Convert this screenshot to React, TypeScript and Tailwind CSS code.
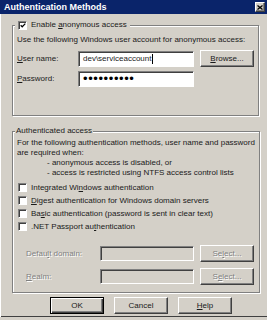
import React from 'react';

const sunken =
  'border border-t-[#808080] border-l-[#808080] border-b-white border-r-white shadow-[inset_1px_1px_0_#404040]';
const raised =
  'border border-t-white border-l-white border-b-[#404040] border-r-[#404040] shadow-[inset_-1px_-1px_0_#808080]';
const disabledText = 'text-[#808080] [text-shadow:1px_1px_0_#fff]';

const CheckBox: React.FC<{ checked?: boolean }> = ({ checked }) => (
  <span className={`flex h-[9px] w-[9px] shrink-0 items-center justify-center bg-white ${sunken}`}>
    {checked && (
      <svg width="7" height="7" viewBox="0 0 7 7" className="ml-[1px] mt-[1px]">
        <polyline points="0.8,3.2 2.6,5 6.2,1.4" fill="none" stroke="#000" strokeWidth="1.4" />
      </svg>
    )}
  </span>
);

const Button: React.FC<{
  children: React.ReactNode;
  isDefault?: boolean;
  disabled?: boolean;
}> = ({ children, isDefault, disabled }) => (
  <button
    type="button"
    disabled={disabled}
    className={`flex h-[17px] w-[54px] shrink-0 items-center justify-center bg-[#d4d0c8] ${
      isDefault
        ? 'border border-black shadow-[inset_1px_1px_0_#fff,inset_-1px_-1px_0_#404040,inset_-2px_-2px_0_#808080]'
        : raised
    } ${disabled ? disabledText : 'text-[#1a1a1a]'}`}
  >
    {children}
  </button>
);

const Field: React.FC<{ children?: React.ReactNode; width: string; gray?: boolean }> = ({
  children,
  width,
  gray
}) => (
  <div
    className={`flex items-center overflow-hidden pl-[4px] ${width} ${sunken} ${
      gray ? 'bg-[#d4d0c8]' : 'bg-white'
    }`}
  >
    {children}
  </div>
);

const methods: { label: React.ReactNode }[] = [
  { label: <>Integrated Wi<u>n</u>dows authentication</> },
  { label: <><u>D</u>igest authentication for Windows domain servers</> },
  { label: <>Ba<u>s</u>ic authentication (password is sent in clear text)</> },
  { label: <>.NET Passport au<u>t</u>hentication</> }
];

export default function App() {
  return (
    <div className="h-[320px] w-[267px] bg-[#d4d0c8] text-[8px] leading-[10px] text-[#1a1a1a] [font-family:'Liberation_Sans',Arial,sans-serif]">
      <div className="flex h-[317px] flex-col shadow-[inset_1px_0_0_#fff,inset_0_-1px_0_#404040]">
        {/* Title bar */}
        <div className="flex h-[14px] shrink-0 items-center justify-between bg-[#0a246a] pl-[4px] pr-[2px]">
          <span className="text-[9px] font-bold text-white">Authentication Methods</span>
          <span className={`flex h-[10px] w-[10px] items-center justify-center bg-[#d4d0c8] ${raised}`}>
            <svg width="6" height="5" viewBox="0 0 6 5">
              <path d="M0.5 0.5 L5.5 4.5 M5.5 0.5 L0.5 4.5" stroke="#000" strokeWidth="1.3" />
            </svg>
          </span>
        </div>

        {/* Anonymous access */}
        <fieldset className="mx-[12px] mt-[6px] h-[96px] shrink-0 border border-[#808080] px-[4px] shadow-[inset_1px_1px_0_#fff,1px_1px_0_#fff]">
          <legend className="-ml-[2px] bg-[#d4d0c8] px-[3px]">
            <span className="flex h-[10px] items-center gap-[4px]">
              <CheckBox checked />
              <span>
                Enable <u>a</u>nonymous access
              </span>
            </span>
          </legend>
          <div className="mt-[5px] whitespace-nowrap">
            Use the following Windows user account for anonymous access:
          </div>
          <div className="mt-[5px] flex h-[17px] items-center">
            <span className="w-[61px]">
              <u>U</u>ser name:
            </span>
            <Field width="h-[16px] w-[116px]">
              <span>{'dev\\serviceaccount'}</span>
              <span className="ml-[1px] h-[10px] w-[1px] bg-black" />
            </Field>
            <span className="ml-[6px]">
              <Button>
                <u>B</u>rowse...
              </Button>
            </span>
          </div>
          <div className="mt-[4px] flex h-[16px] items-center">
            <span className="w-[61px]">
              <u>P</u>assword:
            </span>
            <Field width="h-[16px] w-[116px]">
              <span className="text-[13px] leading-[10px] tracking-[0.6px] text-black">••••••••••</span>
            </Field>
          </div>
        </fieldset>

        {/* Authenticated access */}
        <fieldset className="mx-[12px] mt-[10px] h-[167px] shrink-0 border border-[#808080] px-[4px] shadow-[inset_1px_1px_0_#fff,1px_1px_0_#fff]">
          <legend className="-ml-[2px] bg-[#d4d0c8] px-[1px]">Authenticated access</legend>
          <div className="mt-[2px] whitespace-nowrap">
            <div>For the following authentication methods, user name and password</div>
            <div>are required when:</div>
            <div className="pl-[30px]">- anonymous access is disabled, or</div>
            <div className="pl-[30px]">- access is restricted using NTFS access control lists</div>
          </div>
          <div className="mt-[3px] flex flex-col">
            {methods.map((m, i) => (
              <div key={i} className="flex h-[13px] items-center gap-[4px] whitespace-nowrap pl-[1px]">
                <CheckBox />
                <span>{m.label}</span>
              </div>
            ))}
          </div>
          <div className="mt-[12px] flex h-[17px] items-center pl-[9px]">
            <span className={`w-[74px] ${disabledText}`}>
              Defau<u>l</u>t domain:
            </span>
            <Field width="h-[15px] w-[94px]" gray />
            <span className="ml-[6px]">
              <Button disabled>
                Se<u>l</u>ect...
              </Button>
            </span>
          </div>
          <div className="mt-[6px] flex h-[17px] items-center pl-[9px]">
            <span className={`w-[74px] ${disabledText}`}>
              <u>R</u>ealm:
            </span>
            <Field width="h-[15px] w-[94px]" gray />
            <span className="ml-[6px]">
              <Button disabled>
                S<u>e</u>lect...
              </Button>
            </span>
          </div>
        </fieldset>

        {/* Dialog buttons */}
        <div className="mt-[4px] flex gap-[10px] pl-[50px]">
          <Button isDefault>OK</Button>
          <Button>Cancel</Button>
          <Button>
            <u>H</u>elp
          </Button>
        </div>
      </div>
    </div>
  );
}
